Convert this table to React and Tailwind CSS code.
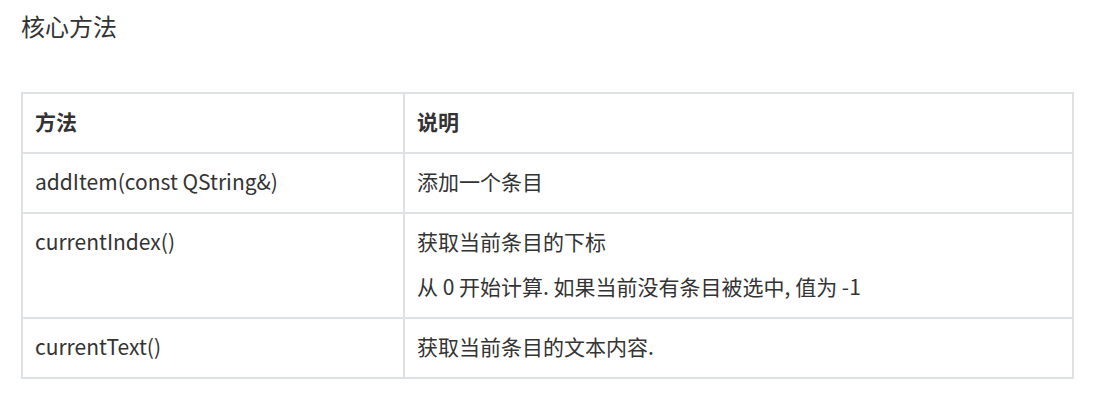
export default function App() {
  const font = { fontFamily: '"Noto Sans CJK SC", "Noto Sans", sans-serif' };
  const td = "border-2 border-[#dfe2e5] px-[12px] pt-[12px] pb-[16px] align-top leading-[30px]";
  return (
    <div className="bg-white w-[1114px] h-[400px] pl-[21px] pt-[8px] text-[#333333]" style={font}>
      <div className="text-[24px] leading-[36px]">核心方法</div>
      <table className="mt-[48px] w-[1053px] border-collapse text-[21px]">
        <thead>
          <tr>
            <th className={`${td} w-[382px] text-left font-bold`}>方法</th>
            <th className={`${td} text-left font-bold`}>说明</th>
          </tr>
        </thead>
        <tbody>
          <tr>
            <td className={td}>addItem(const QString&amp;)</td>
            <td className={td}>添加一个条目</td>
          </tr>
          <tr>
            <td className={td}>currentIndex()</td>
            <td className={td}>
              <p>获取当前条目的下标</p>
              <p className="mt-[15px]">从 0 开始计算. 如果当前没有条目被选中, 值为 -1</p>
            </td>
          </tr>
          <tr>
            <td className={td}>currentText()</td>
            <td className={td}>获取当前条目的文本内容.</td>
          </tr>
        </tbody>
      </table>
    </div>
  );
}
